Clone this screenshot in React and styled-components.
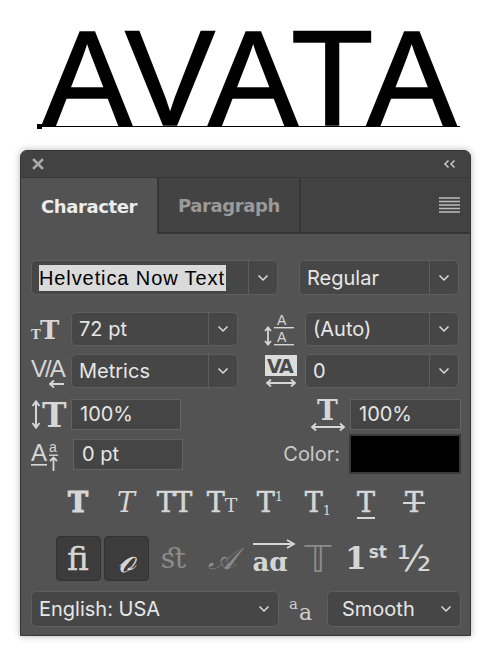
import React from 'react';
import styled, { createGlobalStyle } from 'styled-components';

const GlobalStyle = createGlobalStyle`
  html, body {
    margin: 0;
    padding: 0;
    background: #fff;
  }
  body {
    width: 490px;
    height: 656px;
    overflow: hidden;
    font-family: Inter, "Liberation Sans", sans-serif;
  }
`;

const ICON = '#d6d6d6';
const DIM = '#8c8c8c';

const Artboard = styled.div`
  height: 150px;
  box-sizing: border-box;
  padding: 0 0 23px 40px;
  display: flex;
  align-items: flex-end;
`;

const Headline = styled.div`
  position: relative;
  font-family: "Liberation Sans", Arial, sans-serif;
  font-size: 135px;
  line-height: 0.693;
  letter-spacing: 3px;
  padding-left: 2px;
  color: #000;
  -webkit-text-stroke: 1.6px #000;
  border-bottom: 1px solid #000;

  &::before {
    content: '';
    position: absolute;
    left: -3px;
    bottom: -3px;
    width: 5px;
    height: 5px;
    background: #000;
  }
`;

const Panel = styled.section`
  margin-left: 20px;
  width: 451px;
  height: 486px;
  box-sizing: border-box;
  background: #535353;
  border: 1px solid #363636;
  border-radius: 7px 7px 0 0;
  box-shadow: 0 0 7px rgba(0, 0, 0, 0.3);
  overflow: hidden;
  display: flex;
  flex-direction: column;
`;

const TitleBar = styled.div`
  height: 26px;
  background: #424242;
  display: flex;
  align-items: center;
  justify-content: space-between;
  padding: 0 13px 0 11px;
`;

const TabBar = styled.div`
  height: 56px;
  display: flex;
  background: #424242;
  border-top: 1px solid #383838;
`;

const Tab = styled.div`
  width: ${p => p.$w}px;
  box-sizing: border-box;
  display: flex;
  align-items: center;
  justify-content: center;
  font-family: "DejaVu Sans", Verdana, sans-serif;
  font-weight: bold;
  font-size: 18px;
  letter-spacing: -0.4px;
  color: ${p => (p.$active ? '#ececec' : '#9a9a9a')};
  background: ${p => (p.$active ? '#535353' : '#434343')};
  border-right: 2px solid #363636;
  border-bottom: ${p => (p.$active ? 'none' : '2px solid #363636')};
`;

const TabFill = styled.div`
  flex: 1;
  display: flex;
  align-items: center;
  justify-content: flex-end;
  padding-right: 9px;
  border-bottom: 2px solid #363636;
`;

const Body = styled.div`
  flex: 1;
  display: flex;
  flex-direction: column;
  padding: 26px 9px 0 10px;
`;

const Row = styled.div`
  display: flex;
  align-items: center;
  justify-content: space-between;
  margin-top: ${p => p.$mt || 0}px;
  height: ${p => p.$h}px;
`;

const Pair = styled.div`
  display: grid;
  grid-template-columns: 207px 1fr;
  align-items: center;
  margin-top: ${p => p.$mt || 0}px;
  height: ${p => p.$h}px;
`;

const Cell = styled.div`
  display: flex;
  align-items: center;
  justify-content: ${p => (p.$right ? 'flex-end' : 'flex-start')};
  gap: ${p => p.$gap || 0}px;
  padding-right: ${p => p.$pr || 0}px;
`;

const IconBox = styled.div`
  width: ${p => p.$w || 40}px;
  height: 36px;
  display: flex;
  align-items: center;
  justify-content: flex-start;

  svg {
    overflow: visible;
  }
`;

const Select = styled.div`
  width: ${p => p.$w}px;
  height: ${p => p.$h || 34}px;
  box-sizing: border-box;
  display: flex;
  border: 1px solid #5e5e5e;
  border-radius: 5px;
  background: #464646;
  color: #e6e6e6;
  font-size: 20px;
`;

const Value = styled.div`
  flex: 1;
  display: flex;
  align-items: center;
  padding-left: ${p => p.$pl || 7}px;
  white-space: nowrap;
`;

const Arrow = styled.div`
  width: 28px;
  display: flex;
  align-items: center;
  justify-content: center;
  border-left: ${p => (p.$plain ? 'none' : '1px solid #5e5e5e')};
`;

const Highlight = styled.span`
  font-family: "Liberation Sans", Arial, sans-serif;
  font-size: 20px;
  letter-spacing: 0.9px;
  background: #dadada;
  color: #000;
  padding: 2px 1px 2px 0;
  line-height: 22px;
`;

const Field = styled.div`
  width: ${p => p.$w}px;
  height: 31px;
  box-sizing: border-box;
  border: 1px solid #626262;
  background: #454545;
  color: #e6e6e6;
  font-size: 20px;
  display: flex;
  align-items: center;
  padding-left: 8px;
`;

const Label = styled.span`
  font-size: 20px;
  color: #c9c9c9;
`;

const Swatch = styled.div`
  width: 112px;
  height: 40px;
  box-sizing: border-box;
  background: #000;
  border: 2px solid #3a3a3a;
`;

const Toolbar = styled.div`
  display: grid;
  grid-template-columns: repeat(8, 48px);
  margin: ${p => p.$mt}px 0 0 23px;
  height: ${p => p.$h}px;
  align-items: center;
  justify-items: center;
`;

const Glyph = styled.div`
  position: relative;
  font-family: ${p => (p.$sans ? '"DejaVu Sans", sans-serif' : '"DejaVu Serif", "Liberation Serif", serif')};
  font-weight: ${p => (p.$light ? 'normal' : 'bold')};
  font-style: ${p => (p.$italic ? 'italic' : 'normal')};
  font-size: ${p => p.$size || 27}px;
  line-height: 1;
  color: ${p => (p.$dim ? DIM : ICON)};
  -webkit-text-stroke: ${p => p.$stroke || 0}px ${p => (p.$dim ? DIM : ICON)};
  white-space: nowrap;
  display: flex;
  align-items: baseline;
  text-decoration: ${p => p.$deco || 'none'};
  text-decoration-thickness: 2px;
  text-underline-offset: 5px;
`;

const Small = styled.span`
  font-size: ${p => p.$size || 16}px;
  position: relative;
  top: ${p => p.$top || 0}px;
  margin-left: ${p => p.$ml || 0}px;
  font-family: ${p => (p.$sans ? '"DejaVu Sans", sans-serif' : 'inherit')};
  -webkit-text-stroke: 0;
`;

const Strike = styled.span`
  position: absolute;
  left: -2px;
  right: -2px;
  top: 13px;
  height: 2px;
  background: ${ICON};
`;

const ToggleButton = styled.div`
  width: 45px;
  height: 45px;
  box-sizing: border-box;
  border-radius: 4px;
  background: #3c3c3c;
  border: 1px solid #323232;
  display: flex;
  align-items: center;
  justify-content: center;
`;

const Alternates = styled.div`
  position: relative;
  padding-top: 6px;
`;

const Chevron = () => (
  <svg width="12" height="8" viewBox="0 0 12 8">
    <polyline points="1.5,1.5 6,6 10.5,1.5" fill="none" stroke="#dcdcdc" strokeWidth="1.5" />
  </svg>
);

const CloseIcon = () => (
  <svg width="12" height="12" viewBox="0 0 12 12">
    <path d="M2 2 L10 10 M10 2 L2 10" stroke="#a9a9a9" strokeWidth="2.6" strokeLinecap="square" />
  </svg>
);

const CollapseIcon = () => (
  <svg width="14" height="10" viewBox="0 0 14 10">
    <path d="M5.5 1.5 L2 5 L5.5 8.5 M11.5 1.5 L8 5 L11.5 8.5" fill="none" stroke="#c4c4c4" strokeWidth="1.6" />
  </svg>
);

const MenuIcon = () => (
  <svg width="22" height="16" viewBox="0 0 22 16">
    {[1, 4.5, 8, 11.5, 15].map(y => (
      <rect key={y} x="0" y={y - 0.75} width="21" height="1.5" fill="#bdbdbd" />
    ))}
  </svg>
);

const serif = 'DejaVu Serif, serif';
const sans = 'DejaVu Sans, sans-serif';
const thin = 'Liberation Sans, Arial, sans-serif';

const SizeIcon = () => (
  <svg width="32" height="36" viewBox="0 0 32 36">
    <text x="0" y="28" fontFamily={serif} fontWeight="bold" fontSize="13" fill={ICON}>T</text>
    <text x="9" y="28" fontFamily={serif} fontWeight="bold" fontSize="26" fill={ICON}>T</text>
  </svg>
);

const TrackIcon = () => (
  <svg width="36" height="36" viewBox="0 0 36 36">
    <text x="0" y="24" fontFamily={thin} fontSize="24" fill={ICON} letterSpacing="-2">V/A</text>
    <path d="M33 31 H19 M23 27.5 L19 31 L23 34.5" fill="none" stroke={ICON} strokeWidth="1.8" />
  </svg>
);

const ScaleVIcon = () => (
  <svg width="38" height="36" viewBox="0 0 38 36">
    <path d="M5 6 V31 M1.5 10 L5 5.5 L8.5 10 M1.5 27 L5 31.5 L8.5 27" fill="none" stroke={ICON} strokeWidth="2" />
    <text x="11" y="31" fontFamily={serif} fontWeight="bold" fontSize="33" fill={ICON}>T</text>
  </svg>
);

const ShiftIcon = () => (
  <svg width="32" height="36" viewBox="0 0 32 36">
    <text x="0" y="25" fontFamily={thin} fontSize="24" fill={ICON}>A</text>
    <rect x="0" y="28" width="16" height="1.6" fill={ICON} />
    <text x="18" y="16" fontFamily={thin} fontSize="14" fill={ICON}>a</text>
    <rect x="18" y="18.5" width="9" height="1.4" fill={ICON} />
    <path d="M22.5 35 V21.5 M19 25 L22.5 21.5 L26 25" fill="none" stroke={ICON} strokeWidth="1.8" />
  </svg>
);

const LeadingIcon = () => (
  <svg width="32" height="36" viewBox="0 0 32 36">
    <text x="13" y="14" fontFamily={thin} fontSize="14" fill={ICON}>A</text>
    <rect x="10" y="16" width="20" height="1.4" fill={ICON} />
    <text x="13" y="31" fontFamily={thin} fontSize="14" fill={ICON}>A</text>
    <rect x="10" y="33" width="20" height="1.4" fill={ICON} />
    <path d="M4 17 V33 M1 20 L4 16.5 L7 20 M1 30 L4 33.5 L7 30" fill="none" stroke={ICON} strokeWidth="1.8" />
  </svg>
);

const KernIcon = () => (
  <svg width="34" height="36" viewBox="0 0 34 36">
    <rect x="1" y="2" width="32" height="21" fill="#dcdcdc" />
    <text x="3" y="20" fontFamily={sans} fontWeight="bold" fontSize="19" fill="#4a4a4a" letterSpacing="-1.5">VA</text>
    <path d="M3 30 H31 M7 26.5 L3 30 L7 33.5 M27 26.5 L31 30 L27 33.5" fill="none" stroke={ICON} strokeWidth="1.8" />
  </svg>
);

const ScaleHIcon = () => (
  <svg width="38" height="36" viewBox="0 0 38 36">
    <text x="8" y="24" fontFamily={serif} fontWeight="bold" fontSize="28" fill={ICON}>T</text>
    <path d="M3 31 H35 M7 27.5 L3 31 L7 34.5 M31 27.5 L35 31 L31 34.5" fill="none" stroke={ICON} strokeWidth="1.8" />
  </svg>
);

const AntiAliasIcon = () => (
  <svg width="30" height="32" viewBox="0 0 30 32" style={{ overflow: 'visible' }}>
    <text x="1" y="16" fontFamily={serif} fontSize="15" fill="#cfcfcf">a</text>
    <text x="11" y="27" fontFamily={serif} fontSize="22" fill="#cfcfcf">a</text>
  </svg>
);

const AltArrow = () => (
  <svg width="44" height="10" viewBox="0 0 44 10" style={{ position: 'absolute', top: -4, left: 0 }}>
    <path d="M1 5 H41 M35 1 L42 5 L35 9" fill="none" stroke={ICON} strokeWidth="1.8" />
  </svg>
);

export default function App() {
  return (
    <>
      <GlobalStyle />
      <Artboard>
        <Headline>AVATA</Headline>
      </Artboard>
      <Panel>
        <TitleBar>
          <CloseIcon />
          <CollapseIcon />
        </TitleBar>
        <TabBar>
          <Tab $w={138} $active>Character</Tab>
          <Tab $w={142}>Paragraph</Tab>
          <TabFill>
            <MenuIcon />
          </TabFill>
        </TabBar>
        <Body>
          <Row $h={35}>
            <Select $w={247} $h={35}>
              <Value><Highlight>Helvetica Now Text</Highlight></Value>
              <Arrow><Chevron /></Arrow>
            </Select>
            <Select $w={160} $h={35} style={{ marginRight: 2 }}>
              <Value>Regular</Value>
              <Arrow><Chevron /></Arrow>
            </Select>
          </Row>

          <Pair $mt={16} $h={34}>
            <Cell>
              <IconBox><SizeIcon /></IconBox>
              <Select $w={167}>
                <Value>72 pt</Value>
                <Arrow><Chevron /></Arrow>
              </Select>
            </Cell>
            <Cell $right $gap={7} $pr={2}>
              <IconBox $w={34}><LeadingIcon /></IconBox>
              <Select $w={154}>
                <Value>(Auto)</Value>
                <Arrow><Chevron /></Arrow>
              </Select>
            </Cell>
          </Pair>

          <Pair $mt={8} $h={34}>
            <Cell>
              <IconBox><TrackIcon /></IconBox>
              <Select $w={167}>
                <Value>Metrics</Value>
                <Arrow><Chevron /></Arrow>
              </Select>
            </Cell>
            <Cell $right $gap={7} $pr={2}>
              <IconBox $w={34}><KernIcon /></IconBox>
              <Select $w={154}>
                <Value>0</Value>
                <Arrow><Chevron /></Arrow>
              </Select>
            </Cell>
          </Pair>

          <Pair $mt={9} $h={31}>
            <Cell>
              <IconBox><ScaleVIcon /></IconBox>
              <Field $w={110}>100%</Field>
            </Cell>
            <Cell $right $gap={3}>
              <IconBox $w={38}><ScaleHIcon /></IconBox>
              <Field $w={111}>100%</Field>
            </Cell>
          </Pair>

          <Pair $mt={7} $h={40}>
            <Cell>
              <IconBox $w={42}><ShiftIcon /></IconBox>
              <Field $w={110}>0 pt</Field>
            </Cell>
            <Cell $right $gap={9}>
              <Label>Color:</Label>
              <Swatch />
            </Cell>
          </Pair>

          <Toolbar $mt={4} $h={48}>
            <Glyph $stroke={1.2}>T</Glyph>
            <Glyph $italic $light>T</Glyph>
            <Glyph $light $stroke={0.6} style={{ letterSpacing: -1 }}>TT</Glyph>
            <Glyph $light $stroke={0.6}>T<Small $size={19}>T</Small></Glyph>
            <Glyph $light $stroke={0.6}>T<Small $size={13} $top={-11}>1</Small></Glyph>
            <Glyph $light $stroke={0.6}>T<Small $size={13} $top={3}>1</Small></Glyph>
            <Glyph $light $stroke={0.6} $deco="underline">T</Glyph>
            <Glyph $light $stroke={0.6}>T<Strike /></Glyph>
          </Toolbar>

          <Toolbar $mt={10} $h={45}>
            <ToggleButton><Glyph $light $size={32} $stroke={0.5}>ﬁ</Glyph></ToggleButton>
            <ToggleButton><Glyph $light $italic $size={38}>ℴ</Glyph></ToggleButton>
            <Glyph $light $dim $size={28}>ﬆ</Glyph>
            <Glyph $light $dim $italic $size={30}>𝒜</Glyph>
            <Alternates>
              <AltArrow />
              <Glyph $size={26}>aɑ</Glyph>
            </Alternates>
            <Glyph $sans $light $dim $size={38}>𝕋</Glyph>
            <Glyph $size={31}>1<Small $sans $size={17} $top={-11} $ml={2}>st</Small></Glyph>
            <Glyph $sans $light $size={36}>½</Glyph>
          </Toolbar>

          <Row $mt={10} $h={36}>
            <Select $w={248} $h={36}>
              <Value>English: USA</Value>
              <Arrow $plain><Chevron /></Arrow>
            </Select>
            <AntiAliasIcon />
            <Select $w={134} $h={36}>
              <Value $pl={14}>Smooth</Value>
              <Arrow $plain><Chevron /></Arrow>
            </Select>
          </Row>
        </Body>
      </Panel>
    </>
  );
}
